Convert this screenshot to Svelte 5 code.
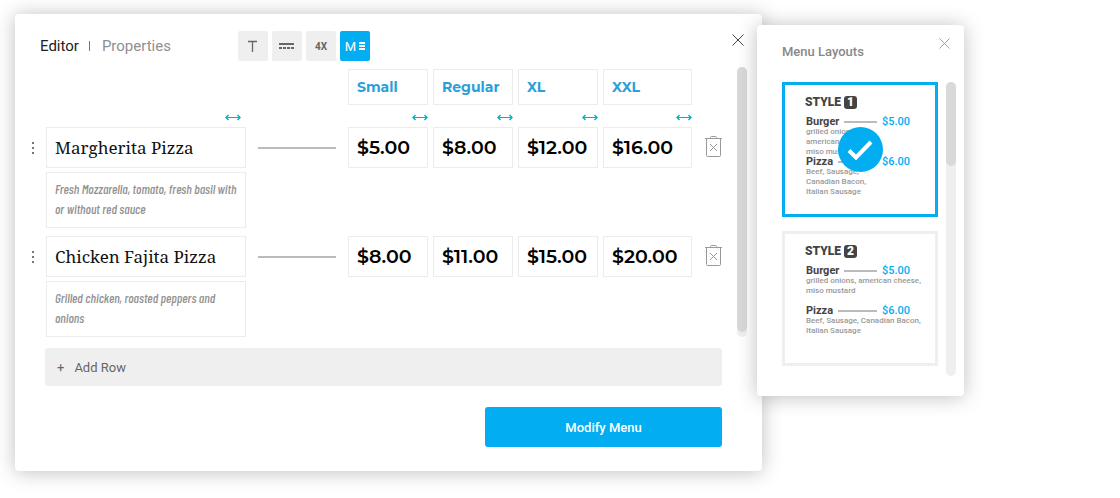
<script lang="ts">
  type Item = {
    name: string;
    description: string;
    prices: string[];
  };

  let sizes = $state(['Small', 'Regular', 'XL', 'XXL']);

  let items: Item[] = $state([
    {
      name: 'Margherita Pizza',
      description: 'Fresh Mozzarella, tomato, fresh basil with or without red sauce',
      prices: ['$5.00', '$8.00', '$12.00', '$16.00']
    },
    {
      name: 'Chicken Fajita Pizza',
      description: 'Grilled chicken, roasted peppers and onions',
      prices: ['$8.00', '$11.00', '$15.00', '$20.00']
    }
  ]);

  const samples = [
    { name: 'Burger', price: '$5.00', text: 'grilled onions, american cheese, miso mustard' },
    { name: 'Pizza', price: '$6.00', text: 'Beef, Sausage, Canadian Bacon, Italian Sausage' }
  ];

  let layout = $state(1);

  function addRow() {
    items.push({ name: '', description: '', prices: sizes.map(() => '') });
  }

  function removeRow(index: number) {
    items.splice(index, 1);
  }
</script>

{#snippet cross(size: number)}
  <svg width={size} height={size} viewBox="0 0 12 12" fill="none" stroke="currentColor" aria-hidden="true">
    <path d="M.5.5l11 11M11.5.5l-11 11" />
  </svg>
{/snippet}

{#snippet resize()}
  <button class="resize" aria-label="Resize column">
    <svg width="16" height="7" viewBox="0 0 16 7" fill="none" stroke="currentColor" aria-hidden="true">
      <path d="M1 3.5h14" />
      <path d="M3.5 1L1 3.5L3.5 6M12.5 1L15 3.5L12.5 6" stroke-width="1.5" />
    </svg>
  </button>
{/snippet}

<div class="workspace">
  <main class="editor">
    <header class="editor-header">
      <nav class="tabs">
        <a href="#editor" class="active">Editor</a>
        <a href="#properties">Properties</a>
      </nav>
      <div class="toolbar">
        <button class="tool" aria-label="Text">
          <svg width="12" height="12" viewBox="0 0 12 12" fill="none" stroke="currentColor" stroke-width="1.3" aria-hidden="true">
            <path d="M1 1.5h9M5.5 1.5V12" />
          </svg>
        </button>
        <button class="tool" aria-label="Divider">
          <svg width="16" height="6" viewBox="0 0 16 6" fill="currentColor" aria-hidden="true">
            <path d="M0 0h15v2H0zM0 4h3v2H0zM4 4h3v2H4zM8 4h3v2H8zM12 4h3v2h-3z" />
          </svg>
        </button>
        <button class="tool small">4X</button>
        <button class="tool selected">
          M
          <svg width="6" height="8" viewBox="0 0 6 8" fill="currentColor" aria-hidden="true">
            <path d="M0 0h6v2H0zM0 3h6v2H0zM0 6h6v2H0z" />
          </svg>
        </button>
      </div>
      <button class="close" aria-label="Close editor">{@render cross(12)}</button>
    </header>

    <div class="scroll-area">
      <table>
        <colgroup>
          <col class="col-handle" />
          <col class="col-name" />
          <col class="col-line" />
          <col class="col-size" />
          <col class="col-size" />
          <col class="col-size" />
          <col class="col-last" />
          <col class="col-delete" />
        </colgroup>
        <thead>
          <tr>
            <td colspan="3"></td>
            {#each sizes as _, i}
              <th class="cell">
                <input class="size" bind:value={sizes[i]} aria-label="Size {i + 1}" />
              </th>
            {/each}
            <td></td>
          </tr>
          <tr class="resizers">
            <td></td>
            <td class="cell">{@render resize()}</td>
            <td></td>
            {#each sizes as _}
              <td class="cell">{@render resize()}</td>
            {/each}
            <td></td>
          </tr>
        </thead>
        {#each items as item, index}
          <tbody>
            <tr>
              <td>
                <button class="handle" aria-label="Move row">
                  <svg width="2" height="12" viewBox="0 0 2 12" fill="currentColor" aria-hidden="true">
                    <path d="M0 0h2v2H0zM0 5h2v2H0zM0 10h2v2H0z" />
                  </svg>
                </button>
              </td>
              <td><input class="name" bind:value={item.name} aria-label="Name" /></td>
              <td><div class="leader"></div></td>
              {#each item.prices as _, i}
                <td class="cell">
                  <input class="price" bind:value={item.prices[i]} aria-label="{sizes[i]} price" />
                </td>
              {/each}
              <td>
                <button class="delete" aria-label="Delete row" onclick={() => removeRow(index)}>
                  <svg width="17" height="23" viewBox="0 0 17 23" fill="none" stroke="currentColor" aria-hidden="true">
                    <path d="M0 2.5h17M5.5 2.5V1.5Q5.5.5 6.5.5h4q1 0 1 1v1" />
                    <path d="M1.5 2.5V19.5q0 1 1 1h12q1 0 1-1V2.5" />
                    <path d="M5 8l7 7M12 8l-7 7" />
                  </svg>
                </button>
              </td>
            </tr>
            <tr>
              <td></td>
              <td class="description-cell">
                <textarea bind:value={item.description} aria-label="Description"></textarea>
              </td>
              <td colspan="6"></td>
            </tr>
          </tbody>
        {/each}
      </table>
      <div class="scrollbar"><div class="thumb"></div></div>
    </div>

    <footer>
      <button class="add" onclick={addRow}><span>+</span>Add Row</button>
      <button class="modify">Modify Menu</button>
    </footer>
  </main>

  <aside class="layouts">
    <header class="layouts-header">
      <h2>Menu Layouts</h2>
      <button class="close" aria-label="Close layouts">{@render cross(11)}</button>
    </header>
    <div class="layouts-body">
      <div class="cards">
        {#each [1, 2] as style}
          <label class="card" class:chosen={layout === style} class:narrow={style === 1}>
            <input type="radio" name="layout" value={style} bind:group={layout} />
            <span class="card-title">STYLE <span class="number">{style}</span></span>
            {#each samples as sample}
              <span class="sample">
                <span class="sample-head">
                  <b>{sample.name}</b>
                  <i></i>
                  <em>{sample.price}</em>
                </span>
                <span class="sample-text">{sample.text}</span>
              </span>
            {/each}
            {#if layout === style}
              <span class="check">
                <svg width="26" height="20" viewBox="0 0 26 20" fill="none" stroke="currentColor" stroke-width="4" aria-hidden="true">
                  <path d="M2 10.5l7 7L24 2" />
                </svg>
              </span>
            {/if}
          </label>
        {/each}
      </div>
      <div class="scrollbar"><div class="thumb short"></div></div>
    </div>
  </aside>
</div>

<style>
  :global(body) {
    background: #fff;
    font-family: Roboto, 'Liberation Sans', sans-serif;
  }

  .workspace {
    display: flex;
    align-items: flex-start;
    padding: 14px 15px 24px;
  }

  .editor,
  .layouts {
    box-sizing: border-box;
    background: #fff;
    border-radius: 4px;
    box-shadow: 0 1px 20px rgba(0, 0, 0, 0.26);
  }

  .editor {
    flex: 0 1 747px;
    min-width: 0;
    padding: 17px 15px 24px 13px;
  }

  button {
    display: flex;
    align-items: center;
    justify-content: center;
    padding: 0;
    border: 0;
    background: none;
    color: inherit;
    font: inherit;
    cursor: pointer;
  }

  svg {
    display: block;
    flex: none;
  }

  .editor-header {
    display: flex;
    align-items: center;
    padding: 0 3px 0 12px;
    margin-bottom: 6px;
  }

  .tabs {
    display: flex;
    align-items: center;
    font-size: 15px;
    line-height: 20px;
  }

  .tabs a {
    color: #8f8f8f;
    text-decoration: none;
  }

  .tabs .active {
    display: flex;
    align-items: center;
    color: #222;
  }

  .tabs .active::after {
    content: '';
    width: 1px;
    height: 10px;
    margin: 0 12px 0 10px;
    background: #777;
  }

  .toolbar {
    display: flex;
    gap: 4px;
    margin-left: 67px;
  }

  .tool {
    gap: 3px;
    width: 30px;
    height: 30px;
    border-radius: 2px;
    background: #efefef;
    color: #666;
    font-size: 13px;
  }

  .tool.small {
    font-size: 10px;
    font-weight: 700;
  }

  .tool.selected {
    background: #02adf2;
    color: #fff;
  }

  .close {
    align-self: flex-start;
    margin: 3px 0 0 auto;
    color: #444;
  }

  .scroll-area {
    display: flex;
    gap: 15px;
  }

  table {
    flex: 1;
    min-width: 0;
    margin-top: 2px;
    table-layout: fixed;
    border-collapse: collapse;
  }

  .col-handle {
    width: 18px;
  }

  .col-name {
    width: 200px;
  }

  .col-line {
    width: 102px;
  }

  .col-size {
    width: 85px;
  }

  .col-last {
    width: 94px;
  }

  .col-delete {
    width: 25px;
  }

  th,
  td {
    padding: 0;
  }

  .cell {
    padding-right: 5px;
  }

  .resizers td {
    height: 22px;
  }

  .resize {
    margin: 2px 0 0 auto;
    color: #00b2c8;
  }

  table input,
  textarea {
    display: block;
    box-sizing: border-box;
    width: 100%;
    margin: 0;
    padding: 0 8px;
    border: 1px solid #ececec;
    border-radius: 0;
    background: #fff;
    outline: none;
  }

  input.size {
    height: 36px;
    color: #2a9fdb;
    font: 700 14px Montserrat, Inter, sans-serif;
  }

  input.name {
    height: 41px;
    color: #111;
    font: 400 17px 'Noto Serif', 'Liberation Serif', serif;
  }

  input.price {
    height: 41px;
    color: #000;
    font: 600 19px Montserrat, Inter, sans-serif;
  }

  textarea {
    height: 56px;
    padding: 6px 4px 6px 8px;
    overflow: hidden;
    color: #909090;
    font: italic 500 13px/20px 'Barlow Condensed', 'Roboto Condensed', sans-serif;
    resize: none;
  }

  .description-cell {
    padding: 4px 0 8px;
  }

  tbody:last-child .description-cell {
    padding-bottom: 0;
  }

  .handle {
    margin-left: 4px;
    color: #777;
  }

  .leader {
    height: 2px;
    margin: 0 12px;
    background: #bbb;
  }

  .delete {
    margin-left: auto;
    color: #999;
  }

  .scrollbar {
    flex: none;
    width: 10px;
    border-radius: 5px;
    background: #efefef;
  }

  .thumb {
    height: 98%;
    border-radius: 5px;
    background: #d9d9d9;
  }

  .thumb.short {
    height: 84px;
  }

  footer {
    display: flex;
    flex-direction: column;
    margin: 11px 25px 0 17px;
  }

  .add {
    justify-content: flex-start;
    gap: 10px;
    height: 38px;
    padding: 0 12px;
    border-radius: 3px;
    background: #efefef;
    color: #666;
    font-size: 13px;
  }

  .modify {
    align-self: flex-end;
    width: 35%;
    height: 40px;
    margin-top: 21px;
    border-radius: 3px;
    background: #02adf2;
    color: #fff;
    font-size: 13px;
    font-weight: 500;
  }

  .layouts {
    position: relative;
    flex: none;
    margin: 11px 0 0 -5px;
    padding: 13px 8px 20px 25px;
  }

  .layouts-header {
    display: flex;
    padding-right: 6px;
  }

  h2 {
    margin: 6px 0 22px;
    color: #888;
    font-size: 13px;
    font-weight: 500;
    line-height: 16px;
  }

  .layouts-header .close {
    margin-top: 0;
    color: #999;
  }

  .layouts-body {
    display: flex;
    gap: 8px;
  }

  .cards {
    display: flex;
    flex-direction: column;
    gap: 14px;
    padding-bottom: 10px;
  }

  .card {
    position: relative;
    box-sizing: border-box;
    width: 156px;
    padding: 11px 10px 17px 20px;
    border: 3px solid #efefef;
    cursor: pointer;
  }

  .card.chosen {
    border-color: #02adf2;
  }

  .card input {
    position: absolute;
    opacity: 0;
  }

  .card-title {
    display: flex;
    gap: 3px;
    margin-bottom: 8px;
    color: #444;
    font-size: 12px;
    font-weight: 900;
    line-height: 13px;
  }

  .number {
    width: 13px;
    border-radius: 3px;
    background: #444;
    color: #fff;
    text-align: center;
  }

  .sample {
    display: block;
    min-height: 40px;
    padding-left: 1px;
  }

  .sample-head {
    display: flex;
    align-items: center;
    gap: 5px;
    width: 104px;
    font-size: 11px;
    line-height: 10px;
  }

  .sample-head b {
    color: #444;
  }

  .sample-head i {
    flex: 1;
    height: 2px;
    background: #bbb;
  }

  .sample-head em {
    color: #02adf2;
    font-style: normal;
    font-weight: 500;
  }

  .sample-text {
    display: block;
    color: #999;
    font-size: 8px;
    font-weight: 500;
    line-height: 10px;
  }

  .narrow .sample-text {
    width: 64px;
  }

  .check {
    position: absolute;
    inset: 0;
    display: flex;
    align-items: center;
    justify-content: center;
    width: 45px;
    height: 45px;
    margin: auto;
    border-radius: 50%;
    background: #02adf2;
    color: #fff;
  }
</style>
